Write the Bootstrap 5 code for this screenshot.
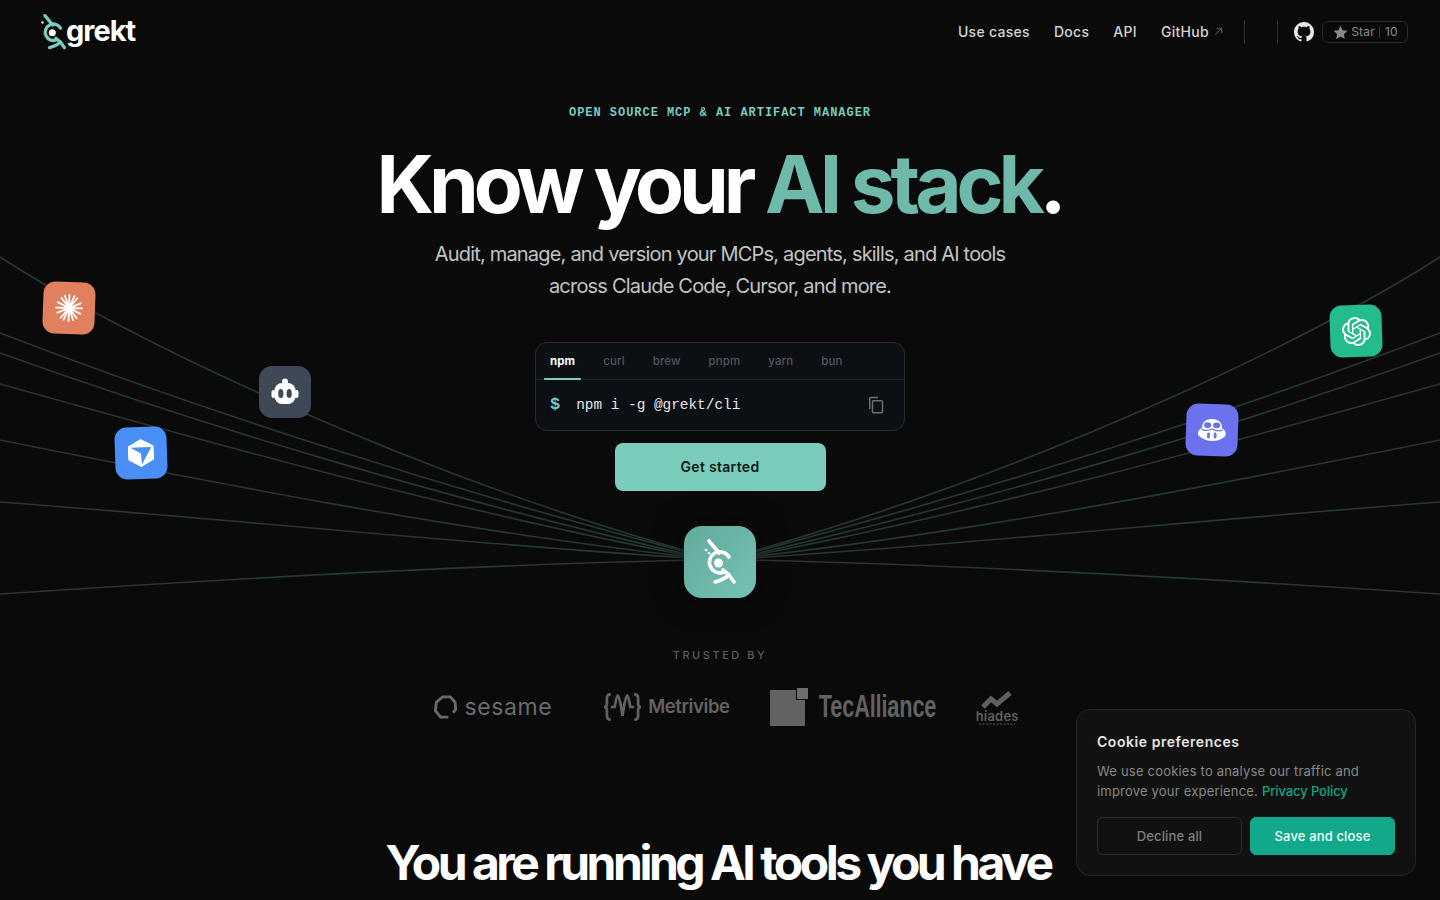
<!DOCTYPE html>
<html lang="en">
<head>
    <meta charset="UTF-8">
    <meta name="viewport" content="width=device-width, initial-scale=1.0">
    <title>grekt</title>
    <link href="https://cdn.jsdelivr.net/npm/bootstrap@5.3.0/dist/css/bootstrap.min.css" rel="stylesheet">
    <style>
        body {
            font-family: Inter, "Liberation Sans", sans-serif;
            background-color: #0a0a0a;
            color: #fff;
            height: 900px;
            overflow: hidden;
        }
        .page-wrap { position: relative; height: 900px; overflow: hidden; }
        .rays { position: absolute; left: 0; top: 0; width: 1440px; height: 900px; }

        /* nav */
        .top-bar { height: 64px; padding: 0 32px 0 40px; position: relative; }
        .brand-name { font-size: 29px; font-weight: 700; letter-spacing: -1px; color: #fff; text-decoration: none; line-height: 36px; margin-left: -1px; margin-top: -3px; }
        .top-link { color: #d4d4d4; font-size: 14px; font-weight: 500; letter-spacing: .3px; text-decoration: none; padding-bottom: 2px; }
        .nav-sep { width: 1px; height: 24px; background: #2b2b2b; }
        .star-pill { height: 22px; width: 86px; border: 1px solid #2c2c2c; border-radius: 6px; color: #8a8a8a; font-size: 12px; line-height: 20px; letter-spacing: .2px; }
        .star-count { border-left: 1px solid #333; padding-left: 5px; margin-left: 4px; line-height: 12px; }

        /* hero */
        .hero-box { position: relative; text-align: center; }
        .eyebrow { font-family: "Liberation Mono", monospace; font-size: 12px; font-weight: 700; letter-spacing: .96px; color: #7accbd; line-height: 16px; margin-top: 41px; }
        .hero-title { font-size: 80px; font-weight: 700; letter-spacing: -5.1px; line-height: 88px; margin: 19px 0 0; padding-right: 2px; color: #fff; }
        .hero-title span { color: #6fb9aa; }
        .hero-sub { font-size: 20px; line-height: 32px; letter-spacing: -.8px; color: #c4c4c4; margin: 10px 0 0; }

        /* install box */
        .term-box { width: 370px; height: 89px; margin: 40px auto 0; background: #0c0f14; border: 1px solid #26292e; border-radius: 12px; text-align: left; overflow: hidden; }
        .term-tabs { height: 37px; padding-left: 8px; border-bottom: 1px solid #22252a; }
        .term-tab { font-size: 11.5px; font-weight: 500; color: #52565c; padding: 0 6px; margin-right: 16px; line-height: 36px; height: 37px; letter-spacing: .1px; }
        .term-tab.is-on { color: #fff; font-weight: 700; border-bottom: 2px solid #7accbd; border-radius: 1px; }
        .term-line { height: 50px; padding: 0 19px 0 14px; font-family: "Liberation Mono", monospace; font-size: 14.4px; color: #e5e7eb; }
        .term-dollar { color: #7accbd; font-weight: 700; font-size: 17px; margin-right: 16px; }
        .term-cmd { margin-top: 2px; }
        .start-btn { display: block; width: 211px; height: 48px; margin: 12px auto 0; background: #7accbd; color: #0c1a18; font-size: 14px; font-weight: 600; letter-spacing: .3px; line-height: 48px; padding: 0; border: 0; border-radius: 8px; }
        .start-btn:hover { background: #7accbd; color: #0c1a18; }

        /* floating icons */
        .tool-tile { position: absolute; width: 52px; height: 52px; border-radius: 12px; display: flex; align-items: center; justify-content: center; }
        .hub-tile { width: 72px; height: 72px; margin: 35px auto 0; border-radius: 18px; background: linear-gradient(135deg, #62a99c, #74c2b3); display: flex; align-items: center; justify-content: center; position: relative; box-shadow: 0 0 30px rgba(0,0,0,.5); }

        /* trusted */
        .trusted-label { font-size: 11px; letter-spacing: 2.55px; color: #5c5c5c; line-height: 14px; margin-top: 50px; font-weight: 500; }
        .logo-row { height: 44px; margin-top: 23px; color: #666; padding-left: 12px; }
        .logo-sesame { font-size: 23px; font-weight: 400; letter-spacing: .6px; color: #6a6a6a; }
        .logo-metri { font-size: 18.5px; font-weight: 600; letter-spacing: -.4px; color: #626262; }
        .logo-tec { font-family: "Liberation Sans", sans-serif; font-size: 31px; font-weight: 700; color: #626262; display: inline-block; transform: scaleX(.7); transform-origin: left center; width: 119px; white-space: nowrap; letter-spacing: -.2px; }
        .logo-hi { font-size: 13px; font-weight: 600; color: #5f5f5f; line-height: 13px; letter-spacing: .2px; margin-top: 1px; }

        .next-title { font-size: 48px; font-weight: 700; letter-spacing: -3.5px; line-height: 56px; margin: 0; padding-right: 4px; position: absolute; left: 0; right: 0; top: 835px; text-align: center; color: #fff; }

        /* cookie */
        .cookie-box { position: fixed; left: 1076px; top: 709px; width: 340px; height: 167px; padding: 20px; background: #111; border: 1px solid #252525; border-radius: 14px; z-index: 5; }
        .cookie-title { font-size: 14px; font-weight: 600; letter-spacing: .55px; color: #e5e5e5; line-height: 24px; margin-bottom: 7px; }
        .cookie-text { font-size: 13px; line-height: 20px; letter-spacing: .2px; color: #888; margin-bottom: 16px; }
        .cookie-text a { color: #12a583; text-decoration: none; letter-spacing: -.1px; font-weight: 500; }
        .cookie-btn { flex: 1; height: 38px; font-size: 13px; font-weight: 500; letter-spacing: .15px; border-radius: 6px; padding: 1px 0 0; }
        .cookie-no { background: transparent; border: 1px solid #2a2a2a; color: #7f7f7f; }
        .cookie-ok { background: #11a98a; border: 1px solid #11a98a; color: #f2fffb; }
    </style>
</head>
<body>
<div class="page-wrap">

    <!-- background lines -->
    <svg class="rays" viewBox="0 0 1440 900" fill="none" stroke="#26382f" stroke-width="1.6">
        <path d="M0 257C120 335 400 470 690 552"/>
        <path d="M0 333C200 410 450 490 690 553"/>
        <path d="M0 353C200 425 450 500 690 555"/>
        <path d="M0 384C200 440 450 510 690 556"/>
        <path d="M0 440C200 480 450 530 690 557"/>
        <path d="M0 502C240 520 480 545 690 558"/>
        <path d="M0 594C240 578 480 565 690 560"/>
        <path d="M1440 257C1320 335 1040 470 750 552"/>
        <path d="M1440 333C1240 410 990 490 750 553"/>
        <path d="M1440 353C1240 425 990 500 750 555"/>
        <path d="M1440 384C1240 440 990 510 750 556"/>
        <path d="M1440 440C1240 480 990 530 750 557"/>
        <path d="M1440 502C1200 520 960 545 750 558"/>
        <path d="M1440 594C1200 578 960 565 750 560"/>
    </svg>

    <!-- top nav -->
    <nav class="top-bar d-flex align-items-center justify-content-between">
        <a href="#" class="d-flex align-items-center text-decoration-none">
            <svg width="27" height="36" viewBox="0 0 34 46" fill="none" stroke="#7accbd" stroke-width="4.2" stroke-linecap="round">
                <path d="M6 2L16 14"/>
                <path d="M26 18A10.5 10.5 0 1 0 21 33"/>
                <circle cx="15.5" cy="24" r="4.5" fill="#fff" stroke="none"/>
                <circle cx="3" cy="11" r="1.6" fill="#f3d9d2" stroke="none"/>
                <path d="M12 43Q20 41 26 36L31 43M20 31L26 36"/>
            </svg>
            <span class="brand-name">grekt</span>
        </a>
        <div class="d-flex align-items-center">
            <a href="#" class="top-link">Use cases</a>
            <a href="#" class="top-link ms-4">Docs</a>
            <a href="#" class="top-link ms-4">API</a>
            <a href="#" class="top-link ms-4 d-flex align-items-center">GitHub
                <svg class="ms-1" width="11" height="11" viewBox="0 0 12 12" fill="none" stroke="#6a6a6a" stroke-width="1"><path d="M2.5 9.5L9.5 2.5M4 2.5H9.5V8"/></svg>
            </a>
            <span class="nav-sep" style="margin-left:20px"></span>
            <span class="nav-sep" style="margin-left:32px"></span>
            <svg class="ms-3" width="20" height="20" viewBox="0 0 16 16" fill="#e8e8e8"><path d="M8 0C3.58 0 0 3.58 0 8c0 3.54 2.29 6.53 5.47 7.59.4.07.55-.17.55-.38 0-.19-.01-.82-.01-1.49-2.01.37-2.53-.49-2.69-.94-.09-.23-.48-.94-.82-1.13-.28-.15-.68-.52-.01-.53.63-.01 1.08.58 1.23.82.72 1.21 1.87.87 2.33.66.07-.52.28-.87.51-1.07-1.78-.2-3.64-.89-3.64-3.95 0-.87.31-1.59.82-2.15-.08-.2-.36-1.02.08-2.12 0 0 .67-.21 2.2.82.64-.18 1.32-.27 2-.27.68 0 1.36.09 2 .27 1.53-1.04 2.2-.82 2.2-.82.44 1.1.16 1.92.08 2.12.51.56.82 1.27.82 2.15 0 3.07-1.87 3.75-3.65 3.95.29.25.54.73.54 1.48 0 1.07-.01 1.93-.01 2.2 0 .21.15.46.55.38A8.013 8.013 0 0016 8c0-4.42-3.58-8-8-8z"/></svg>
            <span class="star-pill d-flex align-items-center justify-content-center" style="margin-left:8px">
                <svg width="17" height="17" viewBox="0 0 24 24" fill="#8a8a8a" style="margin-right:2px"><path d="M12 2.5l2.95 6.2 6.8.9-4.97 4.7 1.27 6.75L12 17.75 5.95 21.05l1.27-6.75L2.25 9.6l6.8-.9z"/></svg>
                Star <span class="star-count">10</span>
            </span>
        </div>
    </nav>

    <!-- hero -->
    <section class="hero-box">
        <div class="eyebrow">OPEN SOURCE MCP &amp; AI ARTIFACT MANAGER</div>
        <h1 class="hero-title">Know your <span>AI stack</span>.</h1>
        <p class="hero-sub">Audit, manage, and version your MCPs, agents, skills, and AI tools<br>across Claude Code, Cursor, and more.</p>

        <div class="term-box">
            <div class="term-tabs d-flex">
                <span class="term-tab is-on">npm</span>
                <span class="term-tab">curl</span>
                <span class="term-tab">brew</span>
                <span class="term-tab">pnpm</span>
                <span class="term-tab">yarn</span>
                <span class="term-tab">bun</span>
            </div>
            <div class="term-line d-flex align-items-center">
                <span class="term-dollar">$</span>
                <span class="term-cmd flex-grow-1">npm i -g @grekt/cli</span>
                <svg width="18" height="18" viewBox="0 0 18 18" fill="none" stroke="#6b6f75" stroke-width="1.5"><rect x="5.5" y="4.75" width="10" height="12" rx="1"/><path d="M2.75 13V2.5a1 1 0 0 1 1-1H11"/></svg>
            </div>
        </div>
        <a href="#" class="btn start-btn">Get started</a>

        <div class="hub-tile">
            <svg width="34" height="46" viewBox="0 0 34 46" fill="none" stroke="#fff" stroke-width="3.6" stroke-linecap="round">
                <path d="M6 2L16 14"/>
                <path d="M26 18A10.5 10.5 0 1 0 21 33"/>
                <circle cx="15.5" cy="24" r="4.5" fill="#fff" stroke="none"/>
                <circle cx="3" cy="11" r="1.3" fill="#fff" stroke="none"/>
                <circle cx="6" cy="14" r="1.3" fill="#fff" stroke="none"/>
                <path d="M12 43Q20 41 26 36L31 43M20 31L26 36"/>
            </svg>
        </div>

        <div class="trusted-label">TRUSTED BY</div>
        <div class="logo-row d-flex align-items-center justify-content-center">
            <div class="d-flex align-items-center">
                <svg width="25" height="26" viewBox="0 0 26 26" fill="none" stroke="#6a6a6a" stroke-width="3"><path d="M16 23.500L8 23.500 2.500 17 3.500 8 10 2.500 18 2.500 23 8 23.500 15.500 21 19"/></svg>
                <span class="logo-sesame" style="margin-left:6px">sesame</span>
            </div>
            <div class="d-flex align-items-center" style="margin-left:51px">
                <svg width="39" height="30" viewBox="0 0 40 30" fill="none" stroke="#626262" stroke-width="2.8"><path d="M8 2Q4 2 4 6V12Q4 15 1 15Q4 15 4 18V24Q4 28 8 28M32 2Q36 2 36 6V12Q36 15 39 15Q36 15 36 18V24Q36 28 32 28"/><path d="M8 15H12Q14 3 15 3 17 3 20 24 23 3 25 3 26 3 28 15H32"/></svg>
                <span class="logo-metri" style="margin-left:6px">Metrivibe</span>
            </div>
            <div class="d-flex align-items-center" style="margin-left:40px">
                <svg width="38" height="38" viewBox="0 0 38 38"><path fill="#626262" d="M0 2H26V12H35V38H0Z"/><rect x="27" y="0" width="11" height="11" fill="#6e6e6e"/></svg>
                <span class="logo-tec ms-2 ps-1">TecAlliance</span>
            </div>
            <div class="d-flex flex-column align-items-center" style="margin-left:41px">
                <svg width="34" height="19" viewBox="0 0 34 19" fill="none" stroke="#5f5f5f" stroke-width="5"><path d="M3 17L11 9 17 14 30 3"/></svg>
                <span class="logo-hi">híades</span>
                <svg width="36" height="2" viewBox="0 0 36 2"><path d="M0 1H36" stroke="#444" stroke-width="1.500" stroke-dasharray="2 1.500"/></svg>
            </div>
        </div>
    </section>

    <h2 class="next-title">You are running AI tools you have</h2>

    <!-- tool tiles -->
    <div class="tool-tile" style="left:43px;top:281.5px;background:#e0805f;transform:rotate(2deg)">
        <svg width="28" height="28" viewBox="0 0 28 28" stroke="#fff" stroke-width="1.8" stroke-linecap="round"><path d="M14 14L14 1M14 14L14 27M14 14L1 14M14 14L27 14M14 14L6 4M14 14L22 24M14 14L22 4M14 14L6 24M14 14L2.500 8.500M14 14L25.500 19.500M14 14L25.500 9M14 14L2.500 19M14 14L9.500 2M14 14L18.500 26M14 14L19 2M14 14L9 26"/></svg>
    </div>
    <div class="tool-tile" style="left:259px;top:365.5px;background:#3f4856;border-radius:13px">
        <svg width="28" height="28" viewBox="0 0 28 28"><circle cx="14" cy="3.500" r="3" fill="#fff"/><rect x="3.500" y="5" width="21" height="21" rx="7.500" fill="#fff"/><rect x="0.500" y="12" width="4" height="8" rx="2" fill="#fff"/><rect x="23.500" y="12" width="4" height="8" rx="2" fill="#fff"/><ellipse cx="9.800" cy="15.500" rx="2.600" ry="4.600" fill="#3f4856"/><ellipse cx="18.200" cy="15.500" rx="2.600" ry="4.600" fill="#3f4856"/></svg>
    </div>
    <div class="tool-tile" style="left:115px;top:427px;background:#4a8ff5;transform:rotate(-2deg)">
        <svg width="26" height="28" viewBox="0 0 26 28"><path fill="#fff" d="M13 0L26 7.300V20.700L13 28 0 20.700V7.300Z"/><path fill="#4a8ff5" d="M2.500 8.300L23.500 8.300 13.600 25.500 13 14.500Z"/></svg>
    </div>
    <div class="tool-tile" style="left:1330px;top:305px;background:#25bc8d;transform:rotate(-2deg)">
        <svg width="29" height="29" viewBox="0 0 24 24" fill="#fff"><path d="M22.2819 9.8211a5.9847 5.9847 0 0 0-.5157-4.9108 6.0462 6.0462 0 0 0-6.5098-2.9A6.0651 6.0651 0 0 0 4.9807 4.1818a5.9847 5.9847 0 0 0-3.9977 2.9 6.0462 6.0462 0 0 0 .7427 7.0966 5.98 5.98 0 0 0 .511 4.9107 6.051 6.051 0 0 0 6.5146 2.9001A5.9847 5.9847 0 0 0 13.2599 24a6.0557 6.0557 0 0 0 5.7718-4.2058 5.9894 5.9894 0 0 0 3.9977-2.9001 6.0557 6.0557 0 0 0-.7475-7.0729zm-9.022 12.6081a4.4755 4.4755 0 0 1-2.8764-1.0408l.1419-.0804 4.7783-2.7582a.7948.7948 0 0 0 .3927-.6813v-6.7369l2.02 1.1686a.071.071 0 0 1 .038.052v5.5826a4.504 4.504 0 0 1-4.4945 4.4944zm-9.6607-4.1254a4.4708 4.4708 0 0 1-.5346-3.0137l.142.0852 4.783 2.7582a.7712.7712 0 0 0 .7806 0l5.8428-3.3685v2.3324a.0804.0804 0 0 1-.0332.0615L9.74 19.9502a4.4992 4.4992 0 0 1-6.1408-1.6464zM2.3408 7.8956a4.485 4.485 0 0 1 2.3655-1.9728V11.6a.7664.7664 0 0 0 .3879.6765l5.8144 3.3543-2.0201 1.1685a.0757.0757 0 0 1-.071 0l-4.8303-2.7865A4.504 4.504 0 0 1 2.3408 7.872zm16.5963 3.8558L13.1038 8.364 15.1192 7.2a.0757.0757 0 0 1 .071 0l4.8303 2.7913a4.4944 4.4944 0 0 1-.6765 8.1042v-5.6772a.79.79 0 0 0-.407-.667zm2.0107-3.0231l-.142-.0852-4.7735-2.7818a.7759.7759 0 0 0-.7854 0L9.409 9.2297V6.8974a.0662.0662 0 0 1 .0284-.0615l4.8303-2.7866a4.4992 4.4992 0 0 1 6.6802 4.66zM8.3065 12.863l-2.02-1.1638a.0804.0804 0 0 1-.038-.0567V6.0742a4.4992 4.4992 0 0 1 7.3757-3.4537l-.142.0805L8.704 5.459a.7948.7948 0 0 0-.3927.6813zm1.0976-2.3654l2.602-1.4998 2.6069 1.4998v2.9994l-2.5974 1.4997-2.6067-1.4997Z"/></svg>
    </div>
    <div class="tool-tile" style="left:1186px;top:404px;background:#6b72ee;transform:rotate(2deg)">
        <svg width="28" height="22" viewBox="0 0 28 22">
            <path fill="#fff" d="M4 9C4 3 8 0 14 0S24 3 24 9C26 10 28 12 28 15 28 18 21 22 14 22S0 18 0 15C0 12 2 10 4 9Z"/>
            <ellipse cx="9.500" cy="6.200" rx="3.600" ry="2.900" fill="#6b72ee"/>
            <ellipse cx="18.500" cy="6.200" rx="3.600" ry="2.900" fill="#6b72ee"/>
            <path d="M3.500 10.500Q8 13 14 10Q20 13 24.500 10.500" fill="none" stroke="#6b72ee" stroke-width="1.200"/>
            <rect x="9.300" y="13.500" width="2.800" height="6" rx="1.400" fill="#6b72ee"/>
            <rect x="15.900" y="13.500" width="2.800" height="6" rx="1.400" fill="#6b72ee"/>
        </svg>
    </div>

    <!-- cookie banner -->
    <div class="cookie-box">
        <div class="cookie-title">Cookie preferences</div>
        <p class="cookie-text">We use cookies to analyse our traffic and improve your experience. <a href="#">Privacy Policy</a></p>
        <div class="d-flex gap-2">
            <button type="button" class="btn cookie-btn cookie-no">Decline all</button>
            <button type="button" class="btn cookie-btn cookie-ok">Save and close</button>
        </div>
    </div>
</div>

<script src="https://cdn.jsdelivr.net/npm/bootstrap@5.3.0/dist/js/bootstrap.bundle.min.js"></script>
</body>
</html>
